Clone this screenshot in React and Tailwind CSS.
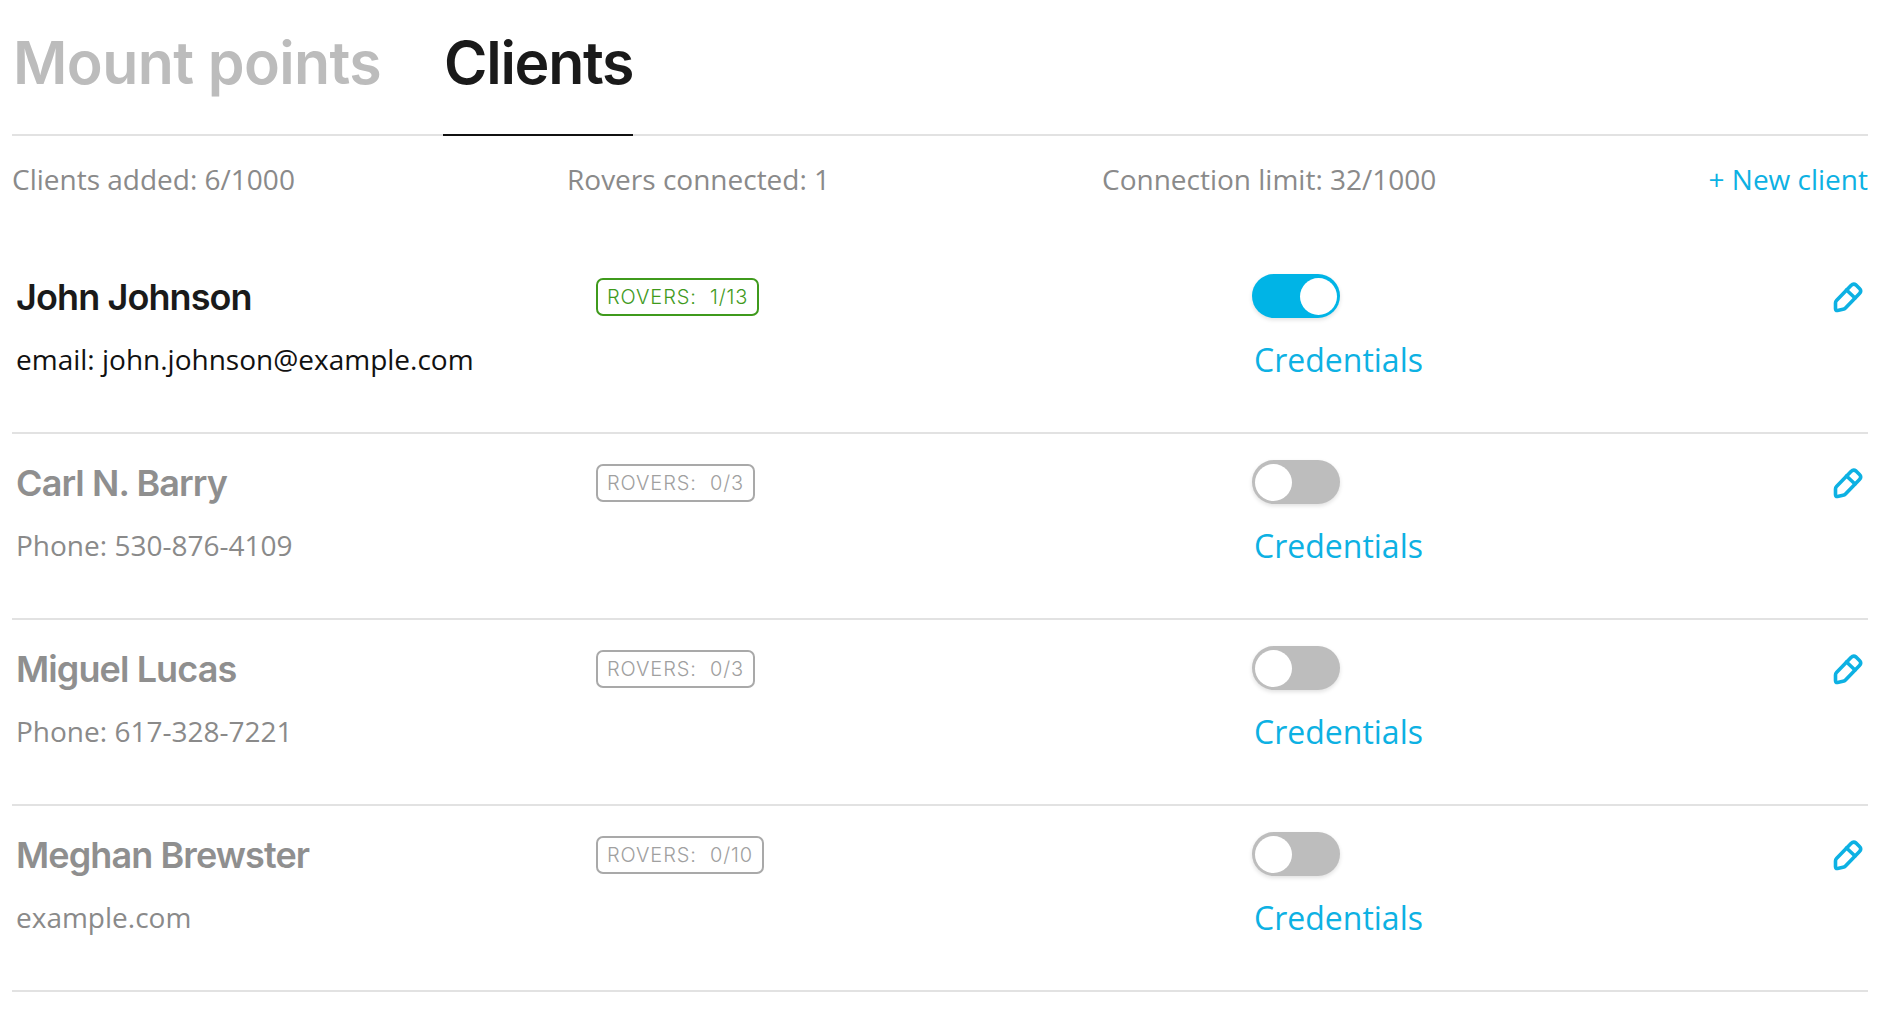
const clients = [
    { name: "John Johnson", info: "email: john.johnson@example.com", rovers: "1/13", on: true },
    { name: "Carl N. Barry", info: "Phone: 530-876-4109", rovers: "0/3", on: false },
    { name: "Miguel Lucas", info: "Phone: 617-328-7221", rovers: "0/3", on: false },
    { name: "Meghan Brewster", info: "example.com", rovers: "0/10", on: false },
];

function Pencil() {
    return (
        <svg width="32" height="32" viewBox="0 0 32 32" fill="none" stroke="#0db1e3" strokeWidth="3.6" strokeLinejoin="round" strokeLinecap="round">
            <path d="M19 4.5Q21.5 2 24 4L27.5 7.5Q30 10 27.5 12.5L13.5 27Q12.5 28 11 28.3L5.5 29.5Q3.5 29.8 3.5 27.5L3.5 22Q3.5 20.5 4.5 19.5Z" />
            <path d="M14.5 9 23 17" />
        </svg>
    );
}

function Toggle({ on }) {
    return (
        <div className={`flex h-[44px] w-[88px] items-center rounded-full shadow-[0_2px_4px_rgba(0,0,0,0.12)] ${on ? "justify-end bg-[#00b4e6] pr-[3px]" : "justify-start bg-[#bdbdbd] pl-[3px]"}`}>
            <div className="h-[37px] w-[37px] rounded-full bg-white" />
        </div>
    );
}

function ClientRow({ client }) {
    const on = client.on;
    return (
        <div className="grid h-[186px] grid-cols-[580px_660px_1fr_auto] border-b-2 border-[#e2e2e2] pt-[29px]">
            <div className="pl-[4px]">
                <div className={`font-['Inter',sans-serif] text-[36px] leading-[40px] font-semibold tracking-[-0.9px] ${on ? "text-[#1a1a1a]" : "text-[#8f8f8f]"}`}>
                    {client.name}
                </div>
                <div className={`mt-[22px] text-[28px] leading-[40px] ${on ? "text-[#111111]" : "text-[#8a8a8a]"}`}>
                    {client.info}
                </div>
            </div>
            <div className="pt-[1px] pl-[4px]">
                <span className={`inline-flex h-[38px] items-center rounded-[7px] border-2 px-[9px] font-['Inter',sans-serif] text-[20px] font-light tracking-[0.9px] whitespace-pre ${on ? "border-[#3f9a1c] text-[#3f9a1c]" : "border-[#a9a9a9] text-[#a0a0a0]"}`}>
                    {"ROVERS:  " + client.rovers}
                </span>
            </div>
            <div className="-mt-[3px]">
                <Toggle on={on} />
                <div className="mt-[22px] pl-[2px] text-[32px] leading-[40px] text-[#0db1e3]">Credentials</div>
            </div>
            <div className="pt-[4px] pr-[4px]">
                <Pencil />
            </div>
        </div>
    );
}

export default function App() {
    return (
        <div className="min-h-[1014px] bg-white pr-[18px] pl-[12px] font-['Open_Sans',sans-serif]">
            <div className="flex h-[136px] gap-[62px] border-b-2 border-[#e2e2e2] pt-[28px] font-['Inter',sans-serif] text-[59px] leading-[70px] font-semibold tracking-[-1.3px]">
                <div className="pl-[1px] tracking-[-0.6px] text-[#bcbcbc]">Mount points</div>
                <div className="h-[108px] border-b-2 border-[#111111] pl-[1px] text-[#1a1a1a]">Clients</div>
            </div>
            <div className="flex h-[112px] pt-[23px] text-[28px] leading-[40px] text-[#8a8a8a]">
                <div className="w-[555px]">Clients added: 6/1000</div>
                <div className="w-[535px]">Rovers connected: 1</div>
                <div className="flex-1">Connection limit: 32/1000</div>
                <div className="text-[#0db1e3]">+ New client</div>
            </div>
            {clients.map(c => (
                <ClientRow key={c.name} client={c} />
            ))}
        </div>
    );
}
